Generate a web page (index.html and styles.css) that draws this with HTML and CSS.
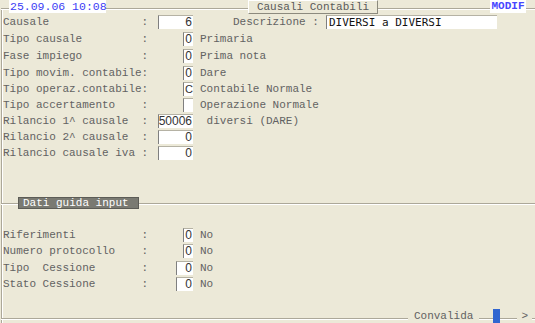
FILE: index.html
```html
<!DOCTYPE html>
<html>
<head>
<meta charset="utf-8">
<link rel="stylesheet" href="styles.css">
</head>
<body>
<div class="screen">
  <div class="frame">
    <div class="top">
      <span class="date">25.09.06 10:08</span>
      <span class="title">Causali Contabili</span>
      <span class="modif">MODIF</span>
    </div>

    <div class="rows">
      <div class="row r17">
        <span class="lbl">Causale              :</span>
        <span class="slot"><span class="box w5">6</span></span>
        <span class="desc-lbl">Descrizione :</span>
        <span class="box desc">DIVERSI a DIVERSI</span>
      </div>
      <div class="row r17">
        <span class="lbl">Tipo causale         :</span>
        <span class="slot"><span class="box w1">0</span></span>
        <span class="txt">Primaria</span>
      </div>
      <div class="row r17">
        <span class="lbl">Fase impiego         :</span>
        <span class="slot"><span class="box w1">0</span></span>
        <span class="txt">Prima nota</span>
      </div>
      <div class="row">
        <span class="lbl">Tipo movim. contabile:</span>
        <span class="slot"><span class="box w1">0</span></span>
        <span class="txt">Dare</span>
      </div>
      <div class="row">
        <span class="lbl">Tipo operaz.contabile:</span>
        <span class="slot"><span class="box w1 left">C</span></span>
        <span class="txt">Contabile Normale</span>
      </div>
      <div class="row">
        <span class="lbl">Tipo accertamento    :</span>
        <span class="slot"><span class="box w1"></span></span>
        <span class="txt">Operazione Normale</span>
      </div>
      <div class="row">
        <span class="lbl">Rilancio 1^ causale  :</span>
        <span class="slot"><span class="box w5">50006</span></span>
        <span class="txt"> diversi (DARE)</span>
      </div>
      <div class="row">
        <span class="lbl">Rilancio 2^ causale  :</span>
        <span class="slot"><span class="box w5">0</span></span>
      </div>
      <div class="row">
        <span class="lbl">Rilancio causale iva :</span>
        <span class="slot"><span class="box w5">0</span></span>
      </div>
    </div>

    <div class="section-bar"><span class="section-lbl">Dati guida input</span></div>

    <div class="rows lower">
      <div class="row">
        <span class="lbl">Riferimenti          :</span>
        <span class="slot"><span class="box w1">0</span></span>
        <span class="txt">No</span>
      </div>
      <div class="row r17">
        <span class="lbl">Numero protocollo    :</span>
        <span class="slot"><span class="box w1">0</span></span>
        <span class="txt">No</span>
      </div>
      <div class="row">
        <span class="lbl">Tipo  Cessione       :</span>
        <span class="slot"><span class="box w2">0</span></span>
        <span class="txt">No</span>
      </div>
      <div class="row">
        <span class="lbl">Stato Cessione       :</span>
        <span class="slot"><span class="box w2">0</span></span>
        <span class="txt">No</span>
      </div>
    </div>

    <div class="footer">
      <span class="conv">Convalida</span>
      <span class="mark"></span>
      <span class="next">&gt;</span>
    </div>
  </div>
</div>
</body>
</html>
```

FILE: styles.css
```css
* { box-sizing: border-box; }
html, body {
  margin: 0;
  padding: 0;
  background: #ece9d8;
}
.screen {
  width: 535px;
  height: 323px;
  overflow: hidden;
  background: #ece9d8;
  font-family: "Liberation Mono", "Courier New", monospace;
  font-size: 11px;
  color: #626262;
}
.frame {
  margin: 8px 0 0 1px;
  height: 315px;
  border-left: 1px solid #aca899;
  box-shadow: inset 1px 0 0 #fff;
  padding-left: 1px;
  display: flex;
  flex-direction: column;
}
.top {
  margin: -8px 0 0 -2px;
  height: 14px;
  display: flex;
  align-items: flex-start;
  background: linear-gradient(to bottom, transparent 8px, #aca899 8px, #aca899 9px, #fff 9px, #fff 10px, transparent 10px);
}
.date {
  margin-left: 8px;
  width: 97px;
  height: 13px;
  line-height: 13px;
  background: #fff;
  color: #3c3cf5;
  padding-left: 1px;
  font-size: 11.5px;
  white-space: pre;
}
.title {
  margin-left: 142px;
  width: 130px;
  height: 14px;
  line-height: 12px;
  border: 1px solid;
  border-color: #fff #8c8a7e #8c8a7e #fff;
  background: #ece9d8;
  text-align: center;
  color: #5a5a5a;
}
.modif {
  margin-left: 112px;
  width: 36px;
  height: 13px;
  line-height: 13px;
  background: #fff;
  color: #4646ff;
  font-weight: bold;
  font-size: 11px;
  text-align: center;
}
.rows {
  margin-top: 1px;
  display: flex;
  flex-direction: column;
}
.row {
  height: 16px;
  display: flex;
  align-items: flex-start;
}
.r17 { height: 17px; }
.lbl {
  width: 155px;
  white-space: pre;
  line-height: 14px;
  height: 14px;
}
.slot {
  width: 35px;
  display: flex;
  justify-content: flex-end;
}
.box {
  height: 14px;
  line-height: 13px;
  background: #fff;
  border-left: 1px solid #7f7f7f;
  border-top: 1px solid #b5b2a4;
  font-family: "Liberation Sans", Arial, sans-serif;
  font-size: 12px;
  color: #333;
  text-align: right;
  padding-right: 1px;
}
.box.w1 { width: 10px; }
.box.w2 { width: 17px; }
.box.w5 { width: 36px; }
.box.left { text-align: left; padding-left: 1px; font-size: 11px; }
.txt {
  margin-left: 7px;
  white-space: pre;
  line-height: 14px;
}
.desc-lbl {
  margin-left: 40px;
  width: 93px;
  white-space: pre;
  line-height: 14px;
}
.box.desc {
  width: 171px;
  text-align: left;
  padding-left: 2px;
  font-family: "DejaVu Sans Mono", "Liberation Mono", monospace;
  font-size: 11px;
  color: #111;
  line-height: 14px;
}
.section-bar {
  margin: 35px 0 0 -2px;
  height: 12px;
  display: flex;
  background: linear-gradient(to bottom, transparent 6px, #aca899 6px, #aca899 7px, #fff 7px, #fff 8px, transparent 8px);
}
.section-lbl {
  margin-left: 17px;
  width: 121px;
  height: 12px;
  line-height: 11px;
  background: #7a7a72;
  border: 1px solid #5c5c56;
  color: #fff;
  padding-left: 4px;
  white-space: pre;
}
.lower { margin-top: 19px; }
.footer {
  margin: auto 0 0 -2px;
  height: 14px;
  display: flex;
  justify-content: flex-end;
  align-items: flex-start;
  padding-right: 3px;
  background: linear-gradient(to bottom, transparent 9px, #aca899 9px, #aca899 10px, #fff 10px, #fff 11px, transparent 11px);
}
.conv {
  padding: 0 6px;
  line-height: 14px;
  background: #ece9d8;
}
.mark {
  margin-left: 14px;
  width: 7px;
  height: 14px;
  background: #3166d0;
}
.next {
  margin-left: 17px;
  padding: 0 4px;
  line-height: 14px;
  background: #ece9d8;
}
```
